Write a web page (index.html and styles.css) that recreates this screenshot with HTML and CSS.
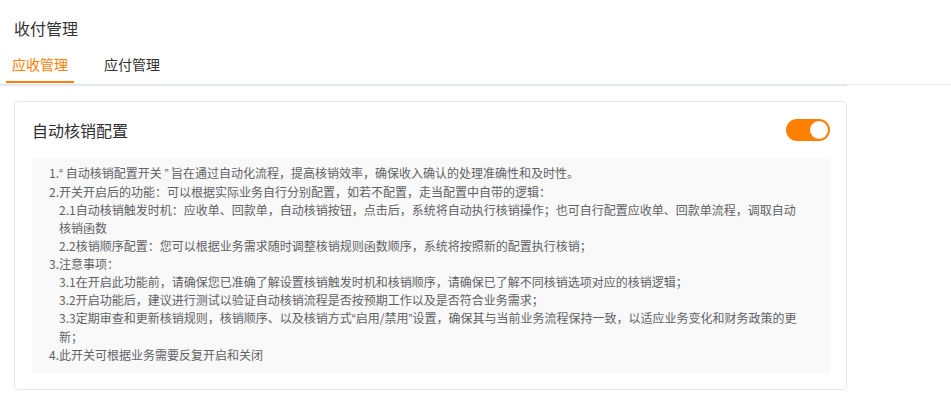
FILE: index.html
```html
<!DOCTYPE html>
<html lang="zh-CN">
<head>
    <meta charset="UTF-8">
    <meta name="viewport" content="width=device-width, initial-scale=1.0">
    <title>收付管理</title>
    <link rel="stylesheet" href="styles.css">
</head>
<body>
    <div class="page-title">收付管理</div>
    <div class="tabs">
        <div class="tabs-nav">
            <div class="tab active">应收管理</div>
            <div class="tab">应付管理</div>
        </div>
    </div>
    <div class="card">
        <div class="card-header">
            <span class="card-title">自动核销配置</span>
            <span class="switch on"><span class="knob"></span></span>
        </div>
        <div class="tips">
            <div class="line">1.<span class="q">“</span> 自动核销配置开关 <span class="q">”</span> 旨在通过自动化流程，提高核销效率，确保收入确认的处理准确性和及时性。</div>
            <div class="line">2.开关开启后的功能：可以根据实际业务自行分别配置，如若不配置，走当配置中自带的逻辑：</div>
            <div class="line sub">2.1自动核销触发时机：应收单、回款单，自动核销按钮，点击后，系统将自动执行核销操作；也可自行配置应收单、回款单流程，调取自动核销函数</div>
            <div class="line sub">2.2核销顺序配置：您可以根据业务需求随时调整核销规则函数顺序，系统将按照新的配置执行核销；</div>
            <div class="line">3.注意事项：</div>
            <div class="line sub">3.1在开启此功能前，请确保您已准确了解设置核销触发时机和核销顺序，请确保已了解不同核销选项对应的核销逻辑；</div>
            <div class="line sub">3.2开启功能后，建议进行测试以验证自动核销流程是否按预期工作以及是否符合业务需求；</div>
            <div class="line sub">3.3定期审查和更新核销规则，核销顺序、以及核销方式<span class="q">“</span>启用/禁用<span class="q">”</span>设置，确保其与当前业务流程保持一致，以适应业务变化和财务政策的更新；</div>
            <div class="line">4.此开关可根据业务需要反复开启和关闭</div>
        </div>
    </div>
</body>
</html>
```

FILE: styles.css
```css
body { margin: 0; font-family: "Noto Sans CJK SC", "Noto Sans", sans-serif; color: #303133; background: #fff; }

.page-title { padding: 17px 0 0 14px; font-size: 16px; line-height: 22px; color: #333; }

.tabs { margin-top: 9px; border-bottom: 1px solid #eeeff2; }
.tabs-nav { display: flex; width: 847px; padding-bottom: 1px; border-bottom: 2px solid #e4e7ed; margin-bottom: -2px; }
.tab { margin-left: 6px; padding: 0 6px; font-size: 14px; line-height: 33px; border-bottom: 2px solid transparent; color: #303133; }
.tab + .tab { margin-left: 24px; }
.tab.active { color: #ff8000; border-bottom-color: #ff8000; }

.card { margin: 16px 0 0 14px; width: 833px; box-sizing: border-box; border: 1px solid #e4e7ed; border-radius: 4px; padding: 0 16px 16px 17px; }
.card-header { display: flex; align-items: center; justify-content: space-between; height: 56px; }
.card-title { font-size: 16px; color: #303133; }

.switch { position: relative; width: 44px; height: 22px; border-radius: 11px; background: #dcdfe6; }
.switch.on { background: #ff8000; }
.knob { position: absolute; top: 2px; left: 2px; width: 18px; height: 18px; border-radius: 50%; background: #fff; }
.switch.on .knob { left: 24px; }

.tips { background: #f9f9f9; padding: 6px 28px 9px 17px; font-size: 12px; line-height: 18px; color: #5f6266; }
.sub { padding-left: 10px; }
.q { font-family: "Liberation Sans", Arial, sans-serif; }
```
